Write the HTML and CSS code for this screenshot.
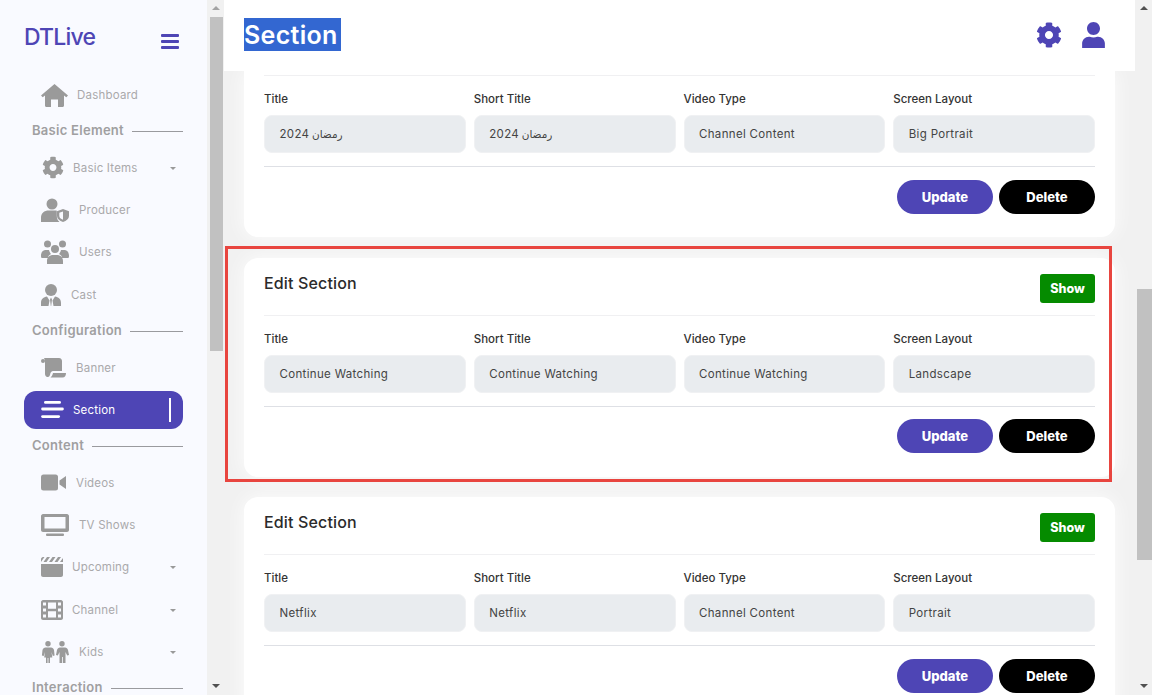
FILE: index.html
```html
<!DOCTYPE html>
<html lang="en">
<head>
<meta charset="utf-8">
<title>Section</title>
<link rel="stylesheet" href="styles.css">
</head>
<body>
<svg class="defs" width="0" height="0" aria-hidden="true">
  <symbol id="i-gear" viewBox="0 0 512 512"><path d="M487.4 315.7l-42.6-24.6c4.3-23.2 4.3-47 0-70.2l42.6-24.6c4.9-2.8 7.1-8.6 5.5-14-11.1-35.6-30-67.8-54.7-94.6-3.8-4.1-10-5.1-14.8-2.3L380.8 110c-17.9-15.4-38.5-27.3-60.8-35.1V25.8c0-5.6-3.9-10.5-9.4-11.7-36.7-8.2-74.3-7.8-109.2 0-5.5 1.2-9.4 6.1-9.4 11.7V75c-22.2 7.9-42.8 19.8-60.8 35.1L88.7 85.5c-4.9-2.8-11-1.9-14.8 2.3-24.7 26.7-43.6 58.9-54.7 94.6-1.7 5.4.6 11.2 5.5 14L67.3 221c-4.3 23.2-4.3 47 0 70.2l-42.6 24.6c-4.9 2.8-7.1 8.6-5.5 14 11.1 35.6 30 67.8 54.7 94.6 3.8 4.1 10 5.1 14.8 2.3l42.6-24.6c17.9 15.4 38.5 27.3 60.8 35.1v49.2c0 5.6 3.9 10.5 9.4 11.7 36.7 8.2 74.3 7.8 109.2 0 5.5-1.2 9.4-6.1 9.4-11.7v-49.2c22.2-7.9 42.8-19.8 60.8-35.1l42.6 24.6c4.9 2.8 11 1.9 14.8-2.3 24.7-26.7 43.6-58.9 54.7-94.6 1.5-5.5-.7-11.3-5.6-14.1zM256 336c-44.1 0-80-35.9-80-80s35.9-80 80-80 80 35.9 80 80-35.9 80-80 80z"/></symbol>
  <symbol id="i-user" viewBox="0 0 448 512"><path d="M224 256c70.7 0 128-57.3 128-128S294.7 0 224 0 96 57.3 96 128s57.3 128 128 128zm89.6 32h-16.7c-22.2 10.2-46.9 16-72.9 16s-50.6-5.8-72.9-16h-16.7C60.2 288 0 348.2 0 422.4V512h448v-89.6c0-74.2-60.2-134.4-134.4-134.4z"/></symbol>
</svg>
<div class="app">
  <aside class="sidebar">
    <div class="brand"><span class="logo">DTLive</span>
      <span class="burger"><i></i><i></i><i></i></span></div>
    <nav class="nav">
      <a class="item"><svg class="ic ic-home" viewBox="0 0 27 23"><path d="M13.500 0L27 11.500 25.300 13.300 23 11.400V21.500c0 .9-.6 1.500-1.500 1.500H17V15.500H10V23H5.500C4.600 23 4 22.400 4 21.500V11.400L1.700 13.300 0 11.500z"/></svg><span class="lbl l9">Dashboard</span></a>
      <div class="head"><span>Basic Element</span><hr></div>
      <a class="item"><svg class="ic ic-gear"><use href="#i-gear"/></svg><span class="lbl l11">Basic Items</span><b class="caret"></b></a>
      <a class="item"><svg class="ic ic-w" viewBox="0 0 28 24"><circle cx="11" cy="6" r="5.500"/><path d="M0 24v-4c0-5 3-7.500 8-7.500h6c1 0 1.500.1 1.800.3V18c0 2.500 1 4.500 2.700 6z"/><path d="M22 11l6 2.200V18c0 2.800-2.500 4.800-6 6-3.500-1.200-6-3.200-6-6v-4.800z"/><path d="M22 13.500v8.300c-2.200-.9-3.700-2.200-3.700-3.800v-3.200z" fill="#f9faff"/></svg><span class="lbl l12">Producer</span></a>
      <a class="item"><svg class="ic ic-w" viewBox="0 0 28 24"><circle cx="6.500" cy="4" r="3.500"/><circle cx="21.500" cy="4" r="3.500"/><circle cx="14" cy="9" r="4"/><path d="M0 16c0-4 2-6 5-6h3c.5 2 1.500 3.500 2 4-2 1-3 2-3 4H1c-.5 0-1-.5-1-2zM28 16c0-4-2-6-5-6h-3c-.5 2-1.500 3.500-2 4 2 1 3 2 3 4h6c.5 0 1-.5 1-2zM6 24v-3c0-4 3-6 6-6h4c3 0 6 2 6 6v3z"/></svg><span class="lbl l12">Users</span></a>
      <a class="item"><svg class="ic ic-c" viewBox="0 0 20 22"><circle cx="10" cy="6" r="6"/><path d="M0 22v-3c0-4 2.500-6 6-6.500l2.500 4-1 5.500zM20 22v-3c0-4-2.500-6-6-6.500l-2.500 4 1 5.500zM10 13.500l1 2-.8 6.500h-.4l-.8-6.500z"/></svg><span class="lbl l9b">Cast</span></a>
      <div class="head"><span>Configuration</span><hr></div>
      <a class="item"><svg class="ic ic-b" viewBox="0 0 26 20"><circle cx="2" cy="3" r="2"/><path d="M3 0h15c2 0 3 1.500 3 3v10h-9c-1.500 0-2 1-2.500 2-.5 1.500-.5 4-3 4-1.500 0-2.500-1.500-2.500-3V5c0-2.500-.5-4-1-5z"/><path d="M12 15h13c0 2.500-1 4.500-3.500 4.500H9.500c1.500-1 2-3 2.500-4.500z"/></svg><span class="lbl l9">Banner</span></a>
      <a class="item active"><svg class="ic ic-s" viewBox="0 0 24 18"><rect x="3" width="18" height="3" rx="1.500"/><rect y="7" width="24" height="3" rx="1.500"/><rect y="15" width="20" height="3" rx="1.500"/></svg><span class="lbl l11">Section</span><b class="bar"></b></a>
      <div class="head"><span>Content</span><hr></div>
      <a class="item"><svg class="ic ic-b2" viewBox="0 0 26 16"><rect width="17" height="16" rx="2.500"/><path d="M18.500 6L25 1.500V14.500L18.500 10z"/></svg><span class="lbl l9">Videos</span></a>
      <a class="item"><svg class="ic ic-w" viewBox="0 0 28 22"><path fill-rule="evenodd" d="M2 0h24c1 0 2 1 2 2v14c0 1-1 2-2 2H2c-1 0-2-1-2-2V2C0 1 1 0 2 0zm1.500 3v11.500h21V3z"/><rect x="5" y="19.500" width="18" height="2.500" rx="1"/></svg><span class="lbl l12">TV Shows</span></a>
      <a class="item"><svg class="ic ic-f" viewBox="0 0 22 20"><path d="M0 7h22v11c0 1-1 2-2 2H2c-1 0-2-1-2-2zM0 2c0-1 1-2 2-2h1.500L0 5zM6 0h3L5.500 5h-3zM11.500 0h3L11 5H8zM17 0h3l-3.500 5h-3zM22 1v4h-3z"/></svg><span class="lbl l11">Upcoming</span><b class="caret"></b></a>
      <a class="item"><svg class="ic ic-f" viewBox="0 0 22 20"><path fill-rule="evenodd" d="M2 0h18c1 0 2 1 2 2v16c0 1-1 2-2 2H2c-1 0-2-1-2-2V2C0 1 1 0 2 0zm0 2.500v3h3v-3zm0 6v3h3v-3zm0 6v3h3v-3zm15-12v3h3v-3zm0 6v3h3v-3zm0 6v3h3v-3zM7 2.500v6.200h8V2.500zm0 8.800v6.200h8v-6.200z"/></svg><span class="lbl l11">Channel</span><b class="caret"></b></a>
      <a class="item"><svg class="ic ic-w" viewBox="0 0 28 22"><circle cx="7" cy="2.700" r="2.700"/><circle cx="21" cy="2.700" r="2.700"/><path d="M4 6.500h6c1.500 0 2.500 1 3 2.500l.6 5.500-1.800.5-1.300-4 .8 5.500H9v5.500H7.400V17H6.600v5H5v-5.500H3.200l.8-5.500-1.300 4-1.800-.5.6-5.500c.5-1.500 1.500-2.500 3-2.500z"/><path d="M18 6.500h6c1.500 0 2.500 1 3 2.500l1 5-1.800.5-1.700-3.500V22h-2.600v-6h-.8v6h-2.600V11l-1.700 3.500-1.800-.5 1-5c.5-1.500 1.500-2.500 3-2.500z"/></svg><span class="lbl l12">Kids</span><b class="caret"></b></a>
      <div class="head"><span>Interaction</span><hr></div>
    </nav>
  </aside>
  <div class="sb sb-left"><b class="up"></b><i class="thumb"></i><span class="fill"></span><b class="down"></b></div>
  <main class="main">
    <header class="top">
      <h1 class="title"><span>Section</span></h1>
      <div class="tools">
        <svg class="t-gear"><use href="#i-gear"/></svg>
        <svg class="t-user"><use href="#i-user"/></svg>
      </div>
    </header>
    <section class="card first">
      <div class="fields">
        <label class="field"><span>Title</span><div class="input">2024&nbsp;<em class="ar">رمضان</em></div></label>
        <label class="field"><span>Short Title</span><div class="input">2024&nbsp;<em class="ar">رمضان</em></div></label>
        <label class="field"><span>Video Type</span><div class="input">Channel Content</div></label>
        <label class="field"><span>Screen Layout</span><div class="input">Big Portrait</div></label>
      </div>
      <div class="actions"><button class="btn update">Update</button><button class="btn delete">Delete</button></div>
    </section>
    <section class="card">
      <div class="mark"></div>
      <div class="card-head"><h2>Edit Section</h2><button class="show">Show</button></div>
      <div class="fields">
        <label class="field"><span>Title</span><div class="input">Continue Watching</div></label>
        <label class="field"><span>Short Title</span><div class="input">Continue Watching</div></label>
        <label class="field"><span>Video Type</span><div class="input">Continue Watching</div></label>
        <label class="field"><span>Screen Layout</span><div class="input">Landscape</div></label>
      </div>
      <div class="actions"><button class="btn update">Update</button><button class="btn delete">Delete</button></div>
    </section>
    <section class="card">
      <div class="card-head"><h2>Edit Section</h2><button class="show">Show</button></div>
      <div class="fields">
        <label class="field"><span>Title</span><div class="input">Netflix</div></label>
        <label class="field"><span>Short Title</span><div class="input">Netflix</div></label>
        <label class="field"><span>Video Type</span><div class="input">Channel Content</div></label>
        <label class="field"><span>Screen Layout</span><div class="input">Portrait</div></label>
      </div>
      <div class="actions"><button class="btn update">Update</button><button class="btn delete">Delete</button></div>
    </section>
  </main>
  <div class="sb sb-right"><b class="up"></b><span class="pre"></span><i class="thumb"></i><span class="fill"></span><b class="down"></b></div>
</div>
</body>
</html>
```
FILE: styles.css
```css
* { box-sizing: border-box; }
html, body { margin: 0; height: 100%; overflow: hidden; }
body { font-family: Inter, "DejaVu Sans", sans-serif; color: #333; }
.defs { position: absolute; }
.app { display: flex; width: 1152px; height: 695px; overflow: hidden; }

.sidebar { width: 207px; flex: none; height: 695px; background: #f9faff; overflow: hidden; }
.brand { height: 76px; display: flex; justify-content: space-between; padding: 23px 28px 0 24px; }
.logo { font-size: 23px; line-height: 29px; font-weight: 500; color: #4e45b5; letter-spacing: -.8px; }
.burger { width: 18px; display: flex; flex-direction: column; gap: 3px; padding-top: 11px; }
.burger i { display: block; height: 3px; border-radius: 1px; background: #4e45b5; }
.nav { padding: 0 24px; }
.item { height: 38px; margin-bottom: 4.3px; display: flex; align-items: center; padding-left: 17px; position: relative; font-size: 11.5px; color: #aaa9ab; }
.ic { fill: #9a9a9a; flex: none; }
.ic-home { width: 27px; height: 23px; }
.ic-gear { width: 22px; height: 23px; margin-left: 1px; }
.ic-w { width: 28px; height: 24px; }
.ic-c { width: 20px; height: 22px; }
.ic-b { width: 26px; height: 20px; }
.ic-b2 { width: 26px; height: 17px; }
.ic-s { width: 23px; height: 17px; fill: #fff; }
.ic-f { width: 22px; height: 20px; }
.lbl { letter-spacing: .2px; }
.l9 { margin-left: 9px; }
.l9b { margin-left: 10px; }
.l11 { margin-left: 9px; }
.l12 { margin-left: 10px; }
.caret { position: absolute; right: 7px; top: 18px; border: 3px solid transparent; border-top: 3px solid #999; border-bottom: 0; width: 0; height: 0; border-left-width: 3.500px; border-right-width: 3.500px; }
.active { background: #4e45b5; border-radius: 12px; color: #fff; }
.bar { position: absolute; left: 145px; top: 7px; width: 2px; height: 24px; background: #fff; }
.head { height: 24px; margin-bottom: 6.6px; padding-left: 8px; display: flex; align-items: center; gap: 8px; font-size: 13px; font-weight: 600; letter-spacing: .28px; color: #a09fa1; }
.head hr { flex: 1; margin: 3px 0 0; border: 0; height: 1px; background: #9a9a9e; }

.sb { width: 17px; flex: none; height: 695px; background: #f1f1f1; display: flex; flex-direction: column; align-items: center; }
.sb-left { width: 17px; }
.sb .up, .sb .down { flex: none; height: 17px; width: 17px; position: relative; }
.sb .up::after { content: ""; position: absolute; left: 4.500px; top: 6px; border: 4px solid transparent; border-top: 0; border-bottom: 4px solid #a3a3a3; }
.sb .down::after { content: ""; position: absolute; left: 4.500px; top: 6px; border: 4px solid transparent; border-bottom: 0; border-top: 4px solid #505050; }
.sb-right .up::after { border-bottom-color: #505050; }
.thumb { display: block; width: 13px; flex: none; background: #c1c1c1; margin-left: 1px; }
.sb-left .thumb { height: 334px; }
.sb-right .thumb { height: 271px; width: 15px; }
.sb-right .pre { height: 272px; flex: none; }
.fill { flex: 1; }

.main { width: 911px; flex: none; height: 695px; overflow: hidden; background: #f1f1f1; }
.top { height: 71px; background: #fff; display: flex; justify-content: space-between; padding: 18px 30px 0 20px; position: relative; z-index: 2; }
.title { margin: 0; font-size: 25px; line-height: 34px; height: 33px; font-weight: 600; letter-spacing: .3px; color: #fff; }
.title span { display: block; width: 97px; height: 33px; background: #3367d1; }
.tools { display: flex; gap: 20px; padding-top: 4px; }
.t-gear { width: 26px; height: 26px; fill: #4e45b5; }
.t-user { width: 23px; height: 26px; fill: #4e45b5; }

.card { margin: 0 20px 20px; width: 871px; height: 219.500px; background: #fff; border-radius: 14px; padding: 16px 20px 0; position: relative; box-shadow: 0 0 20px rgba(255,255,255,.9); }
.card.first { height: 166px; padding-top: 4px; border-radius: 0 0 14px 14px; margin-bottom: 20.500px; }
.mark { position: absolute; left: -19px; top: -12px; width: 887px; height: 236px; border: 3px solid #e8453f; pointer-events: none; z-index: 1; }
.card-head { height: 42px; display: flex; justify-content: space-between; align-items: flex-start; border-bottom: 1px solid #f0f0f2; }
.card-head h2 { margin: -1px 0 0; font-size: 16px; line-height: 20px; font-weight: 500; letter-spacing: .15px; color: #2b2b2b; }
.show { width: 55px; height: 29px; border: 0; border-radius: 3px; background: #058b00; color: #fff; font: 800 12.500px Inter, sans-serif; padding: 0; }
.first .fields { border-top: 1px solid #f0f0f2; }
.fields { display: grid; grid-template-columns: repeat(4, 1fr); column-gap: 8px; padding-top: 15px; padding-bottom: 13px; border-bottom: 1px solid #dee0e5; }
.field { display: block; }
.field span { display: block; font-size: 11.500px; line-height: 16px; font-weight: 500; color: #333; margin-bottom: 8px; }
.input { height: 38px; border: 1px solid #f0f1f3; border-radius: 8px; background: #e9ecef; padding: 0 14.500px 0 14.500px; display: flex; align-items: center; font-size: 11.500px; letter-spacing: .33px; color: #444; }
.ar { font-style: normal; font-size: 10.500px; letter-spacing: -.2px; margin-left: -1px; }
.actions { display: flex; justify-content: flex-end; gap: 6px; padding-top: 12.600px; }
.btn { width: 96px; height: 34px; border: 0; border-radius: 17px; color: #fff; font: 800 13px Inter, sans-serif; padding: 0; }
.update { background: #4e45b5; }
.delete { background: #000; }
```
